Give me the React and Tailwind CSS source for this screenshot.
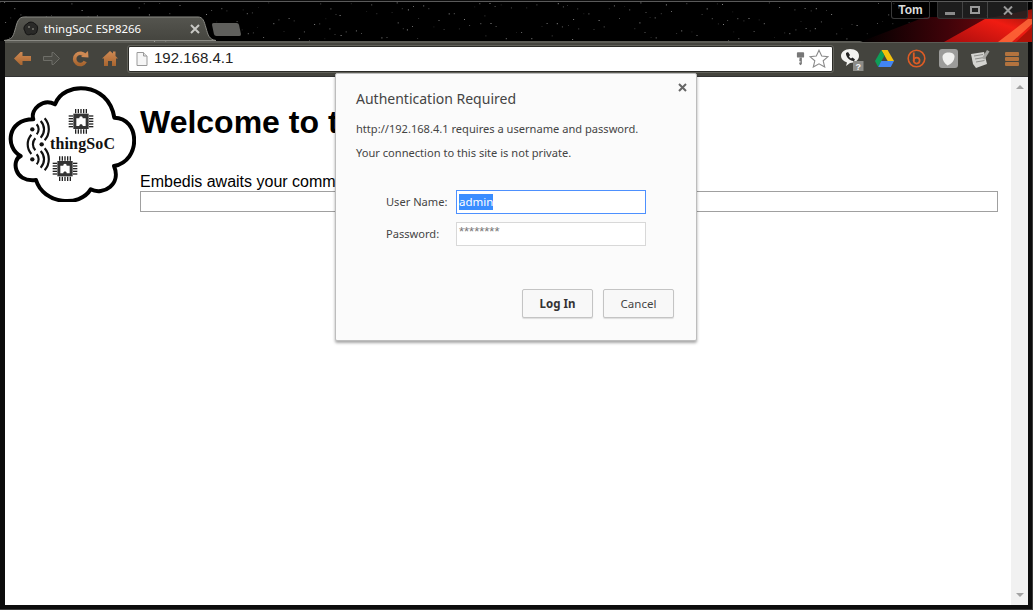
import React from 'react';

// deterministic star field for the browser theme
const stars = Array.from({ length: 260 }, (_, i) => ({
    x: (i * 397.7) % 1033,
    y: (i * i * 13.3 + i * 7.1) % 40,
    o: 0.1 + ((i * 37) % 50) / 100,
}));

function ThemeBackdrop() {
    return (
        <svg className="absolute inset-0" width="1033" height="40" viewBox="0 0 1033 40">
            <defs>
                <linearGradient id="glow" x1="0" y1="0" x2="1" y2="0">
                    <stop offset="0" stopColor="#000" />
                    <stop offset="0.5" stopColor="#3f0309" />
                    <stop offset="1" stopColor="#8a0a0e" />
                </linearGradient>
                <linearGradient id="flare" x1="0" y1="1" x2="1" y2="0">
                    <stop offset="0" stopColor="#a80d0d" />
                    <stop offset="0.6" stopColor="#f01c12" />
                    <stop offset="1" stopColor="#8a1208" />
                </linearGradient>
            </defs>
            {stars.map((s, i) => (
                <rect key={i} x={s.x} y={s.y} width="1" height="1" fill="#fff" opacity={s.o} />
            ))}
            <polygon points="860,40 925,15 1033,15 1033,40" fill="url(#glow)" />
            <polygon points="944,40 985,17 1033,7 1033,40" fill="url(#flare)" />
            <polygon points="998,40 1028,17 1033,17 1033,21 1012,40" fill="#ff6a3a" opacity="0.85" />
            <polygon points="1016,40 1033,24 1033,40" fill="#b01208" />
        </svg>
    );
}

function Tab() {
    return (
        <div className="relative w-[212px] h-[26px] shrink-0">
            <svg className="absolute inset-0" width="212" height="26" viewBox="0 0 212 26">
                <defs>
                    <linearGradient id="tabFill" x1="0" y1="0" x2="0" y2="1">
                        <stop offset="0" stopColor="#55554f" />
                        <stop offset="1" stopColor="#45453f" />
                    </linearGradient>
                </defs>
                <path d="M0 25.5 C8 24.5 9 22 11 15 C13 8 14 2 20 2 L194 2 C199 2 200 6 202 13 C204 20 205 24.5 212 25.5 Z" fill="url(#tabFill)" stroke="#8a8a84" strokeWidth="1" />
            </svg>
            <div className="relative flex items-center h-full pl-[19px] pr-[16px] pt-[2px]">
                <svg width="16" height="16" viewBox="0 0 16 16" className="shrink-0">
                    <path d="M4 3 C6 0 11 1 12 3 C15 4 15 8 14 10 C14 13 10 14 8 13 C5 15 2 13 2 10 C0 8 1 4 4 3 Z" fill="#2a2a28" stroke="#111" strokeWidth="1" />
                    <circle cx="6" cy="6" r="1" fill="#77776f" />
                    <circle cx="10" cy="8" r="1" fill="#77776f" />
                </svg>
                <span className="ml-[5px] text-[11.4px] text-white font-['Noto_Sans',sans-serif] whitespace-nowrap">thingSoC ESP8266</span>
                <svg width="10" height="10" viewBox="0 0 10 10" className="ml-auto">
                    <path d="M1 1 L9 9 M9 1 L1 9" stroke="#c8c8c4" strokeWidth="2" />
                </svg>
            </div>
        </div>
    );
}

function WindowControls() {
    return (
        <div className="flex items-start">
            <div className="h-[18px] w-[39px] -mt-px border border-t-0 border-[#3a3a3a] rounded-b-[3px] flex items-center justify-center text-[12px] font-bold text-[#dcdcdc]">Tom</div>
            <div className="ml-[7px] mr-[4px] h-[17px] w-[91px] bg-[#202020]/90 border border-t-0 border-[#333] rounded-b-[3px] flex">
                <div className="w-[25px] border-r border-[#444] flex items-end justify-center pb-[3px]">
                    <div className="w-[10px] h-[3px] bg-[#8a8a8a]" />
                </div>
                <div className="w-[25px] border-r border-[#444] flex items-center justify-center">
                    <div className="w-[10px] h-[8px] border-2 border-[#9a9a9a]" />
                </div>
                <div className="flex-1 flex items-center justify-center">
                    <svg width="10" height="9" viewBox="0 0 10 9">
                        <path d="M1 0.5 L9 8.5 M9 0.5 L1 8.5" stroke="#9a9a9a" strokeWidth="2" />
                    </svg>
                </div>
            </div>
        </div>
    );
}

const NavButton = ({ children }) => <div className="w-[29px] h-[24px] flex items-center justify-center shrink-0">{children}</div>;
const ExtButton = ({ children }) => <div className="w-[32px] h-[24px] flex items-center justify-center shrink-0">{children}</div>;

function Toolbar() {
    return (
        <div className="ml-[5px] mr-[4px] h-[35px] bg-[#44443e] border-t-2 border-[#5c5c56] flex items-center pl-[3px] pb-[2px] shrink-0">
            <svg width="0" height="0" className="absolute">
                <defs>
                    <linearGradient id="nav" x1="0" y1="0" x2="0" y2="1">
                        <stop offset="0" stopColor="#d08a54" />
                        <stop offset="1" stopColor="#a8652f" />
                    </linearGradient>
                </defs>
            </svg>
            <NavButton>
                <svg width="17" height="13" viewBox="0 0 17 13">
                    <path d="M0 6.5 L6.5 0 L8.5 0 L8.5 4 L17 4 L17 9 L8.5 9 L8.5 13 L6.5 13 Z" fill="url(#nav)" />
                </svg>
            </NavButton>
            <NavButton>
                <svg width="17" height="13" viewBox="0 0 17 13">
                    <path d="M16.5 6.5 L10.5 0.5 L9 0.5 L9 4.5 L0.5 4.5 L0.5 8.5 L9 8.5 L9 12.5 L10.5 12.5 Z" fill="#4c4c46" stroke="#6e6e68" />
                </svg>
            </NavButton>
            <NavButton>
                <svg width="17" height="16" viewBox="0 0 17 16">
                    <path d="M13 5 A5.6 5.6 0 1 0 13.2 10.5" fill="none" stroke="url(#nav)" strokeWidth="3.6" />
                    <path d="M9 6 L16.5 6.5 L16 0 Z" fill="#d08a54" />
                </svg>
            </NavButton>
            <NavButton>
                <svg width="16" height="15" viewBox="0 0 16 15">
                    <path d="M8 0 L11 2.6 L11 0.5 L13.5 0.5 L13.5 5 L16 7.4 L14 7.4 L14 15 L10 15 L10 10 L6 10 L6 15 L2 15 L2 7.4 L0 7.4 Z" fill="url(#nav)" />
                </svg>
            </NavButton>

            <div className="ml-[4px] w-[705px] h-[26px] bg-white border border-[#2c2c28] rounded-[2px] flex items-center shrink-0 outline outline-[#77776f]/60">
                <svg width="12" height="14" viewBox="0 0 12 14" className="ml-[7px]">
                    <path d="M1 0.5 H7.5 L11 4 V13.5 H1 Z" fill="#f6f6f6" stroke="#9a9a9a" />
                    <path d="M7.5 0.5 V4 H11" fill="#e0e0e0" stroke="#9a9a9a" />
                </svg>
                <span className="ml-[6px] text-[15px] text-[#222] font-['Liberation_Sans',sans-serif]">192.168.4.1</span>
                <svg width="9" height="15" viewBox="0 0 10 16" className="ml-auto">
                    <rect x="1" y="1" width="8" height="6" rx="1" fill="#777" />
                    <path d="M4 7 H6.5 V14 L5 15.5 L3.6 14 V12.5 H5 V11 H3.6 Z" fill="#777" />
                </svg>
                <svg width="20" height="19" viewBox="0 0 20 19" className="ml-[4px] mr-[3px]">
                    <path d="M10 1.2 L12.7 7 L19 7.6 L14.2 11.8 L15.7 18 L10 14.8 L4.3 18 L5.8 11.8 L1 7.6 L7.3 7 Z" fill="#fff" stroke="#8a8a8a" strokeWidth="1.1" />
                </svg>
            </div>

            <div className="ml-[3px] flex">
                <ExtButton>
                    <svg width="24" height="24" viewBox="0 0 24 24">
                        <path d="M10 2 C16 2 19 5 19 9 C19 13 15 16 10 16 L6 19 L7 15.5 C3 14 1 12 1 9 C1 5 5 2 10 2 Z" fill="#f2f2f0" />
                        <path d="M6 6 L8 5 L10 8 L9 9.5 C9.6 10.6 10.2 11.2 11 11.6 L12.5 10.5 L15 12.5 L14 14 C10.5 14.5 5.5 10 6 6 Z" fill="#222" />
                        <rect x="13" y="14" width="10.5" height="10" fill="#8c8c88" />
                        <text x="18.2" y="22.5" textAnchor="middle" fontSize="9" fontWeight="700" fill="#f4f4f4" fontFamily="Liberation Sans">?</text>
                    </svg>
                </ExtButton>
                <ExtButton>
                    <svg width="19" height="17" viewBox="0 0 19 17">
                        <path d="M6.3 0 H12.6 L19 11 H12.7 Z" fill="#f4c20d" />
                        <path d="M6.3 0 L0 11 L3.2 17 L9.5 5.6 Z" fill="#0f9d58" />
                        <path d="M6.3 11 H19 L15.8 17 H3.2 Z" fill="#4285f4" />
                    </svg>
                </ExtButton>
                <ExtButton>
                    <svg width="19" height="19" viewBox="0 0 19 19">
                        <circle cx="9.5" cy="9.5" r="8.3" fill="none" stroke="#dd5c25" strokeWidth="1.6" />
                        <path d="M6.8 3.5 V12" stroke="#dd5c25" strokeWidth="1.8" />
                        <circle cx="9.6" cy="11.6" r="3" fill="none" stroke="#dd5c25" strokeWidth="1.7" />
                    </svg>
                </ExtButton>
                <ExtButton>
                    <div className="w-[19px] h-[19px] rounded-[3px] bg-[#9c9c9a] flex items-center justify-center">
                        <svg width="13" height="14" viewBox="0 0 13 14">
                            <path d="M6.5 0.5 C10 0.5 12.5 2 12.5 4.5 C12.5 8.5 9.5 12 5.5 13.5 C2.5 11.5 0.5 8.5 0.5 5 C0.5 2.5 3 0.5 6.5 0.5 Z" fill="#f0f0ee" />
                        </svg>
                    </div>
                </ExtButton>
                <ExtButton>
                    <svg width="20" height="20" viewBox="0 0 20 20">
                        <path d="M1 5 L14 3 L17 15 L6 19 L3 15 Z" fill="#d4d4d0" />
                        <path d="M4 7 L13 5.5 M5 10 L14 8.5 M6 13 L14.5 11.5" stroke="#8e8e8a" strokeWidth="1" />
                        <path d="M12 9 L17 1 L19.5 2.5 L14.5 10.5 Z" fill="#a6a6a2" />
                    </svg>
                </ExtButton>
                <ExtButton>
                    <div className="w-[14px] flex flex-col gap-[1px]">
                        <div className="h-[4px] rounded-[1px] bg-[#b3733e]" />
                        <div className="h-[4px] rounded-[1px] bg-[#b3733e]" />
                        <div className="h-[4px] rounded-[1px] bg-[#b3733e]" />
                    </div>
                </ExtButton>
            </div>
        </div>
    );
}

function Chip({ x, y }) {
    const pins = [-16, -8, 0, 8, 16];
    return (
        <g transform={`translate(${x} ${y})`}>
            {pins.map((p) => (
                <g key={p} stroke="#222" strokeWidth="4">
                    <path d={`M${p} -37 V-24`} />
                    <path d={`M${p} 24 V37`} />
                    <path d={`M-37 ${p} H-24`} />
                    <path d={`M24 ${p} H37`} />
                </g>
            ))}
            <rect x="-23" y="-23" width="46" height="46" fill="#333" />
            <path d="M-14 -9 H-5 C-6 -17 6 -17 5 -9 H14 V14 H5 C6 7 -6 7 -5 14 H-14 Z" fill="#fff" />
        </g>
    );
}

function Logo() {
    return (
        <svg width="130" height="118" viewBox="18 24 390 354" className="shrink-0 ml-px">
            <path d="M165 85 C190 15 325 15 343 125 C420 125 425 255 342 270 C365 325 310 360 272 340 C240 395 130 385 108 312 C40 320 35 250 62 240 C15 215 20 130 100 130 C90 100 130 65 165 85 Z" fill="#fff" stroke="#000" strokeWidth="12" strokeLinejoin="round" />
            <Chip x={243} y={136} />
            <Chip x={195} y={278} />
            <circle cx="97" cy="160" r="6.5" fill="#111" />
            <circle cx="125" cy="205" r="6.5" fill="#111" />
            <circle cx="97" cy="250" r="6.5" fill="#111" />
            <g fill="none" stroke="#111" strokeWidth="6.5">
                <path d="M110 145 A22 22 0 0 1 110 175" />
                <path d="M122 135 A36 36 0 0 1 122 185" />
                <path d="M134 127 A50 50 0 0 1 134 193" />
                <path d="M110 235 A22 22 0 0 1 110 265" />
                <path d="M122 225 A36 36 0 0 1 122 275" />
                <path d="M134 217 A50 50 0 0 1 134 283" />
                <path d="M106 187 A26 26 0 0 0 106 223" />
                <path d="M94 176 A44 44 0 0 0 94 234" />
            </g>
            <text x="150" y="218" fontSize="48" fontWeight="700" fill="#111" fontFamily="Liberation Serif" textLength="195">thingSoC</text>
        </svg>
    );
}

function AuthDialog() {
    return (
        <div className="absolute left-[330px] top-[-4px] w-[362px] h-[268px] bg-[#fbfbfb] border border-[#bdbdbd] rounded-[2px] shadow-[0_2px_3px_rgba(0,0,0,0.35)] px-[20px] pt-[15px] font-['Noto_Sans',sans-serif] text-[#444]">
            <svg width="9" height="9" viewBox="0 0 9 9" className="absolute right-[9px] top-[9px]">
                <path d="M1 1 L8 8 M8 1 L1 8" stroke="#666" strokeWidth="2" />
            </svg>
            <div className="text-[14px] leading-[20px] text-[#444]">Authentication Required</div>
            <div className="mt-[11px] text-[11.1px] leading-[18px]">http://192.168.4.1 requires a username and password.</div>
            <div className="mt-[6px] text-[11.1px] leading-[18px]">Your connection to this site is not private.</div>
            <div className="mt-[28px] pl-[30px] text-[11.1px]">
                <div className="flex items-center">
                    <span className="w-[70px]">User Name:</span>
                    <div className="w-[190px] h-[24px] border border-[#4d90fe] bg-white flex items-center pl-[2px]">
                        <span className="bg-[#3a8dff] text-white leading-[16px] text-[11.5px]">admin</span>
                    </div>
                </div>
                <div className="flex items-center mt-[8px]">
                    <span className="w-[70px] pt-[1px]">Password:</span>
                    <div className="w-[190px] h-[24px] border border-[#d8d8d8] bg-white pl-[2px] text-[13px] leading-[18px] text-[#777] font-['Liberation_Sans',sans-serif]">********</div>
                </div>
            </div>
            <div className="mt-[43px] flex justify-end gap-[10px] pr-[2px]">
                <button className="w-[71px] h-[29px] bg-[#f8f8f8] border border-[#c4c4c4] rounded-[2px] shadow-[0_1px_1px_rgba(0,0,0,0.12)] text-[11.5px] font-bold text-[#333]">Log In</button>
                <button className="w-[71px] h-[29px] bg-[#f8f8f8] border border-[#c4c4c4] rounded-[2px] shadow-[0_1px_1px_rgba(0,0,0,0.12)] text-[11.5px] text-[#444]">Cancel</button>
            </div>
        </div>
    );
}

export default function App() {
    return (
        <div className="w-[1033px] h-[610px] bg-[#0c0c0c] pt-px border-r border-b border-[#3c3c3c] flex flex-col overflow-hidden font-['Liberation_Sans',Arial,sans-serif]">
            <div className="relative h-[40px] border-t border-[#5a5a5a] bg-black shrink-0">
                <ThemeBackdrop />
                <div className="relative flex items-end justify-between h-full pl-[4px]">
                    <div className="flex items-end self-end">
                        <Tab />
                        <div className="w-[27px] h-[13px] -ml-[3px] mb-[5px] bg-[#5f5f5c] rounded-[2px] skew-x-12" />
                    </div>
                    <div className="self-start">
                        <WindowControls />
                    </div>
                </div>
            </div>

            <Toolbar />

            <div className="relative ml-[5px] mr-[4px] mb-[4px] flex-1 flex bg-white border-t border-[#333] min-h-0">
                <div className="flex-1 flex pt-[7px] min-w-0">
                    <Logo />
                    <div className="ml-[4px] mr-[13px] flex-1 min-w-0">
                        <h1 className="text-[32px] leading-[37px] font-bold text-black mt-[20px] whitespace-nowrap">Welcome to thingSoC</h1>
                        <div className="mt-[32px] text-[16px] leading-[18px] text-black">Embedis awaits your commands</div>
                        <div className="h-[21px] border border-[#a0a0a0] bg-white" />
                    </div>
                </div>
                <div className="w-[17px] bg-[#f1f1f1] flex flex-col items-center justify-between py-[8px] shrink-0">
                    <div className="w-0 h-0 border-x-[4px] border-x-transparent border-b-[4px] border-b-[#a3a3a3]" />
                    <div className="w-0 h-0 border-x-[4px] border-x-transparent border-t-[4px] border-t-[#a3a3a3]" />
                </div>
                <AuthDialog />
            </div>
        </div>
    );
}
